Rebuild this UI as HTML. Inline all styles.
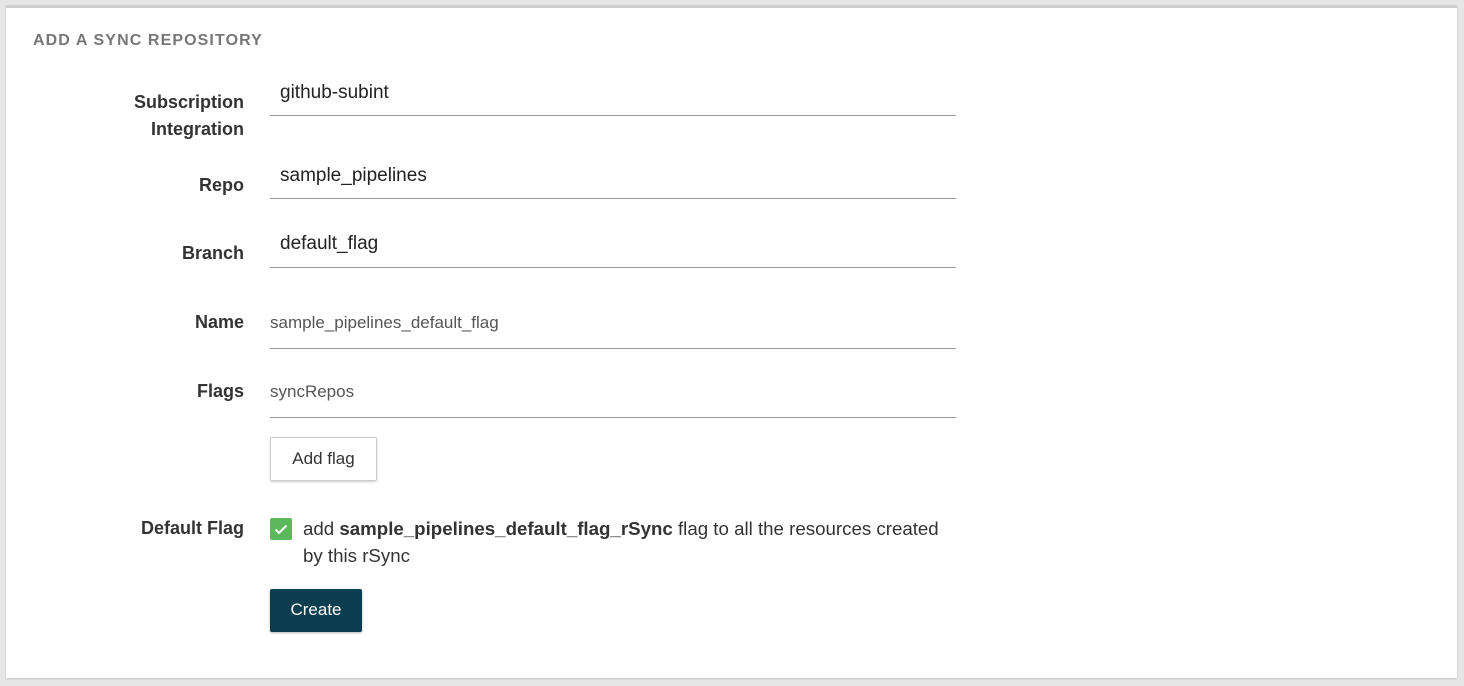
<!DOCTYPE html>
<html><head><style>
body{margin:0;width:1464px;height:686px;background:#e6e6e6;font-family:"Liberation Sans",Arial,sans-serif;position:relative;overflow:hidden}
.card{position:absolute;left:6px;top:5px;width:1451px;height:670px;background:#fff;border-top:3px solid #cfcfcf;box-shadow:0 1px 2px rgba(0,0,0,.15)}
.a{position:absolute;white-space:nowrap}
.lbl{right:1220px;font-weight:bold;font-size:18px;color:#333;text-align:right;line-height:27px}
.val{left:280px;font-size:19px;color:#222}
.val2{left:270px;font-size:17px;color:#555}
.ln{position:absolute;left:270px;width:686px;height:1px;background:#999}
</style></head><body>
<div class="card"></div>
<div class="a" style="left:33px;top:32px;font-size:16px;font-weight:bold;color:#777;letter-spacing:1.1px">ADD A SYNC REPOSITORY</div>
<div class="a lbl" style="top:89px">Subscription<br>Integration</div>
<div class="a val" style="top:82px">github-subint</div><div class="ln" style="top:115px"></div>
<div class="a lbl" style="top:172px">Repo</div>
<div class="a val" style="top:165px">sample_pipelines</div><div class="ln" style="top:198px"></div>
<div class="a lbl" style="top:240px">Branch</div>
<div class="a val" style="top:233px">default_flag</div><div class="ln" style="top:267px"></div>
<div class="a lbl" style="top:309px">Name</div>
<div class="a val2" style="top:313px">sample_pipelines_default_flag</div><div class="ln" style="top:348px"></div>
<div class="a lbl" style="top:378px">Flags</div>
<div class="a val2" style="top:382px">syncRepos</div><div class="ln" style="top:417px"></div>
<div class="a" style="left:270px;top:437px;width:105px;height:42px;border:1px solid #ccc;border-radius:2px;box-shadow:0 1px 2px rgba(0,0,0,.2);font-size:17px;color:#333;text-align:center;line-height:42px">Add flag</div>
<div class="a lbl" style="top:515px">Default Flag</div>
<div class="a" style="left:270px;top:518px;width:22px;height:22px;background:#5cb85c;border-radius:2px"><svg width="22" height="22"><path d="M5.5 11.5l3.5 3.5 7.5-7.5" stroke="#fff" stroke-width="2" fill="none"/></svg></div>
<div class="a" style="left:303px;top:515px;font-size:18.7px;color:#333;line-height:27px">add <b>sample_pipelines_default_flag_rSync</b> flag to all the resources created<br>by this rSync</div>
<div class="a" style="left:270px;top:589px;width:92px;height:43px;background:#0b3f50;border-radius:2px;box-shadow:0 1px 2px rgba(0,0,0,.3);color:#fff;font-size:17px;text-align:center;line-height:42px">Create</div>
</body></html>
